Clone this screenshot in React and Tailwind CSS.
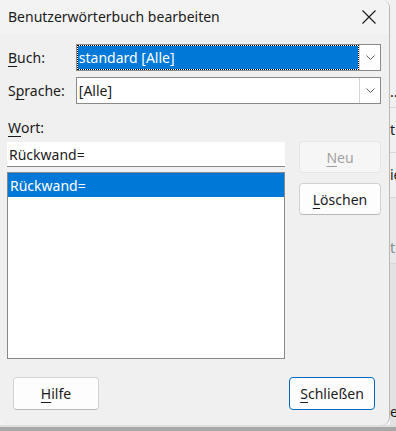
import React from "react";

function Chevron() {
  return (
    <svg width="9" height="5" viewBox="0 0 9 5">
      <path d="M0.5 0.5 L4.5 4.5 L8.5 0.5" fill="none" stroke="#606060" strokeWidth="1" />
    </svg>
  );
}

function CloseX() {
  return (
    <svg width="14" height="14" viewBox="0 0 14 14">
      <path d="M0.5 0.5 L13.5 13.5 M13.5 0.5 L0.5 13.5" fill="none" stroke="#1a1a1a" strokeWidth="1.1" />
    </svg>
  );
}

function Btn({ children, className = "" }) {
  return (
    <div
      className={
        "h-[33px] w-[86px] rounded-[4px] border flex items-center justify-center text-[14px] " +
        className
      }
    >
      {children}
    </div>
  );
}

export default function App() {
  return (
    <div className="w-[396px] h-[431px] overflow-hidden bg-[#f3f3f3] flex flex-col font-['Noto_Sans','Open_Sans',sans-serif] text-[#1b1b1b]">
      <div className="flex h-[425px]">
        {/* Dialog */}
        <div className="w-[390px] h-[425px] rounded-[8px] bg-[#f0f0f0] border-r border-[#b8b8b8] flex flex-col overflow-hidden">
          {/* Title bar */}
          <div className="h-[34px] bg-[#f3f3f3] flex items-center justify-between pl-[8px] pr-[13px]">
            <span className="text-[14px] leading-none">Benutzerwörterbuch bearbeiten</span>
            <CloseX />
          </div>

          {/* Body */}
          <div className="flex flex-col pl-[7px] pr-[8px] pt-[10px]">
            <div className="flex items-center h-[27px]">
              <div className="w-[69px] pl-[1px] text-[14px]">
                <span className="underline underline-offset-[3px]">B</span>uch:
              </div>
              <div className="w-[306px] h-[27px] border border-[#8a8a8a] bg-white flex">
                <div className="flex-1 border border-dotted border-black bg-white">
                  <div className="h-full bg-[#0078d7] text-white text-[14px] flex items-center pl-[1px]">
                    standard [Alle]
                  </div>
                </div>
                <div className="w-[21px] border-l border-[#d4d4d4] flex items-center justify-center">
                  <Chevron />
                </div>
              </div>
            </div>

            <div className="flex items-center h-[27px] mt-[6px]">
              <div className="w-[69px] pl-[1px] text-[14px]">
                S<span className="underline underline-offset-[3px]">p</span>rache:
              </div>
              <div className="w-[306px] h-[27px] border border-[#8a8a8a] bg-white flex">
                <div className="flex-1 text-[14px] flex items-center pl-[2px]">[Alle]</div>
                <div className="w-[21px] border-l border-[#d4d4d4] flex items-center justify-center">
                  <Chevron />
                </div>
              </div>
            </div>

            <div className="h-[20px] mt-[13px] pl-[1px] text-[14px] flex items-center">
              <span className="underline underline-offset-[3px]">W</span>ort:
            </div>

            <div className="flex mt-[5px]">
              <div className="w-[278px] flex flex-col">
                <div className="h-[25px] bg-white border-b border-[#8a8a8a] text-[14px] flex items-center pl-[2px]">
                  Rückwand=
                </div>
                <div className="h-[187px] mt-[5px] border border-[#888888] bg-white">
                  <div className="h-[24px] bg-[#0078d7] text-white text-[14px] flex items-center pl-[2px]">
                    Rückwand=
                  </div>
                </div>
              </div>
              <div className="ml-[14px] flex flex-col -mt-[1px]">
                <div className="h-[32px] w-[82px] rounded-[4px] border border-[#e6e6e6] bg-[#f6f6f6] text-[#a2a2a2] text-[14px] flex items-center justify-center">
                  <span className="underline underline-offset-[3px]">N</span>eu
                </div>
                <div className="h-[32px] w-[82px] mt-[10px] rounded-[4px] border border-[#d2d2d2] border-b-[#b8b8b8] bg-[#fdfdfd] text-[14px] flex items-center justify-center">
                  <span className="underline underline-offset-[3px]">L</span>öschen
                </div>
              </div>
            </div>
          </div>

          {/* Footer */}
          <div className="flex justify-between pl-[13px] pr-[14px] mt-[18px]">
            <Btn className="border-[#d2d2d2] border-b-[#b8b8b8] bg-[#fdfdfd]">
              <span className="underline underline-offset-[3px]">H</span>ilfe
            </Btn>
            <Btn className="border-[#0067c0] bg-[#fdfdfd]">
              <span className="underline underline-offset-[3px]">S</span>chließen
            </Btn>
          </div>
        </div>

        {/* Underlying window strip */}
        <div className="w-[6px] flex flex-col text-[14px] leading-none overflow-hidden bg-[#f0f0f0]">
          <div className="h-[108px] border-b border-[#d8d8d8] flex items-end pb-[8px] whitespace-nowrap">...</div>
          <div className="h-[45px] border-b border-[#d8d8d8] flex items-center whitespace-nowrap">t</div>
          <div className="h-[45px] border-b border-[#d8d8d8] flex items-center whitespace-nowrap">ie</div>
          <div className="h-[66px] border-b border-[#d8d8d8] bg-[#e8e8e8] flex items-end pb-[8px] text-[#8a8a8a] whitespace-nowrap">t</div>
          <div className="flex-1 bg-[#e2e2e2] flex items-end pb-[6px] whitespace-nowrap">e(</div>
        </div>
      </div>
      {/* bottom strip */}
      <div className="flex-1 flex flex-col">
        <div className="h-[2px] bg-[#dedede]"></div>
        <div className="flex-1 bg-[#a8a8a8]"></div>
      </div>
    </div>
  );
}
